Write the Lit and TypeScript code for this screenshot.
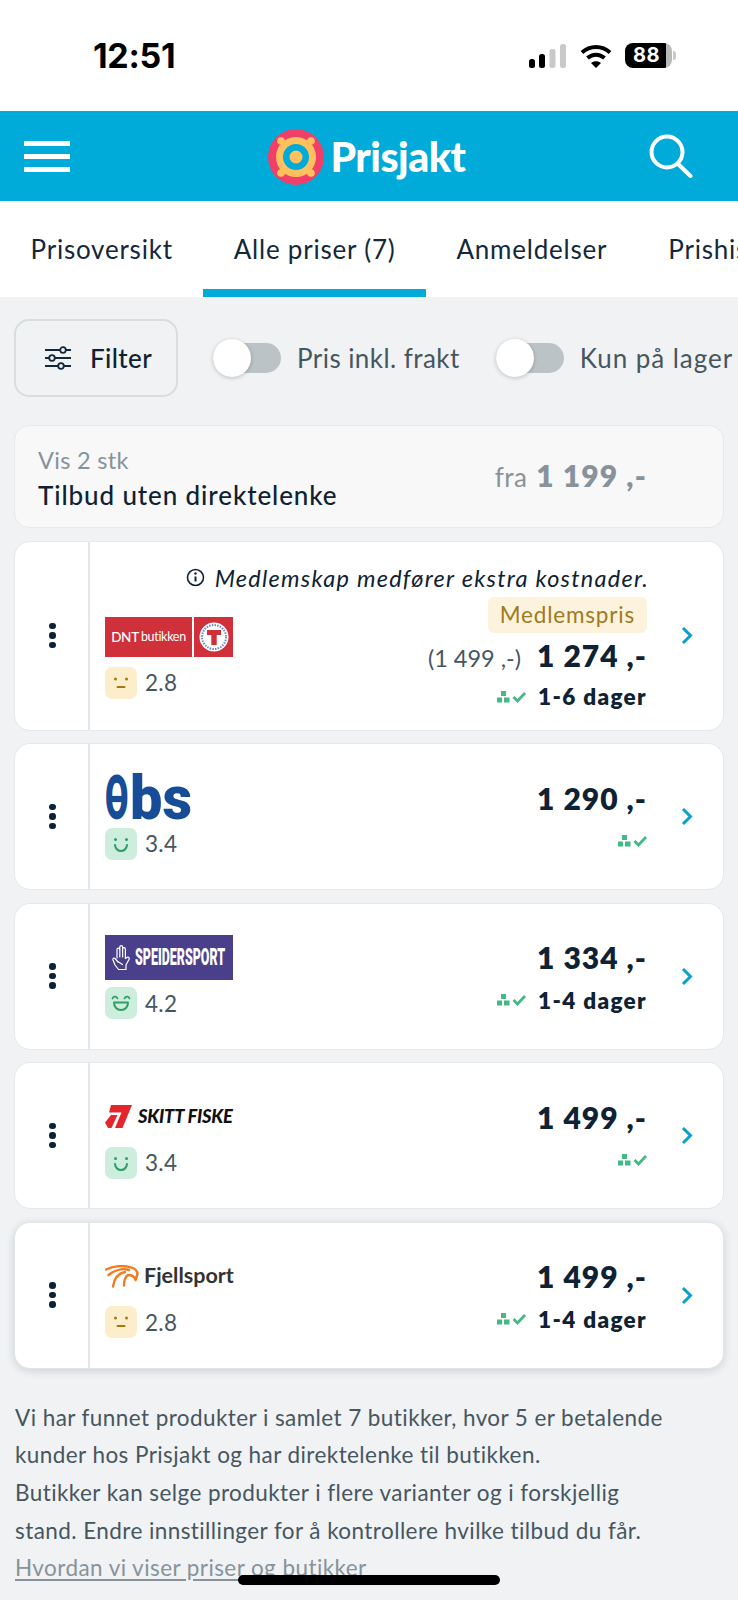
import { LitElement, html, css, svg } from "lit";
import { customElement } from "lit/decorators.js";

const faces: Record<string, unknown> = {
  neutral: svg`<circle cx="10.5" cy="12" r="1.5" fill="#a6770f"/><circle cx="21.5" cy="12" r="1.5" fill="#a6770f"/><path d="M12.5 20h7" stroke="#a6770f" stroke-width="2" stroke-linecap="round"/>`,
  smile: svg`<circle cx="10.5" cy="11.5" r="1.5" fill="#2f9e68"/><circle cx="21.5" cy="11.5" r="1.5" fill="#2f9e68"/><path d="M10 17c.6 4 3 6 6 6s5.400-2 6-6" fill="none" stroke="#2f9e68" stroke-width="2" stroke-linecap="round"/>`,
  grin: svg`<path d="M7.500 11.500c1-2.500 4-2.500 5 0M19.500 11.500c1-2.500 4-2.500 5 0" fill="none" stroke="#2f9e68" stroke-width="1.800" stroke-linecap="round"/><path d="M9 15.500h14c0 4.500-3 7.500-7 7.500s-7-3-7-7.500z" fill="none" stroke="#2f9e68" stroke-width="2" stroke-linejoin="round"/>`,
};

const stock = html`<svg class="stock" width="29" height="12" viewBox="0 0 29 12"><g fill="#43b984"><rect x="4" y="0" width="5" height="5"/><rect x="0" y="6.500" width="5" height="5"/><rect x="7" y="6.500" width="5.500" height="5"/></g><path d="M16.500 6l4 4 7.500-8" fill="none" stroke="#43b984" stroke-width="2.800"/></svg>`;

const dnt = html`<div class="dnt"><div class="dnt-a"><span class="dnt-bold">DNT</span><span class="thin">butikken</span></div><div class="dnt-b"><svg width="30" height="30" viewBox="0 0 30 30"><circle cx="15" cy="15" r="14.500" fill="#fff"/><circle cx="15" cy="15" r="12" fill="none" stroke="#6f84bd" stroke-width="2" stroke-dasharray="1.500 1.200"/><rect x="8" y="8" width="14" height="5" fill="#cf3039"/><rect x="12.300" y="8" width="5.400" height="15" fill="#cf3039"/></svg></div></div>`;

const obs = html`<div class="obs"><span class="obs-o">O<i class="obs-bar"></i></span><span class="obs-bs">bs</span></div>`;

const speider = html`<div class="speider"><svg width="20" height="27" viewBox="0 0 20 27" fill="none" stroke="#fff" stroke-width="1.200" stroke-linejoin="round" stroke-linecap="round"><path d="M5 14V5.500a1.400 1.400 0 0 1 2.800 0V3a1.400 1.400 0 0 1 2.800 0v2a1.400 1.400 0 0 1 2.800 0v9.500l2.300-1.500c1.500 0 2 1.500 1 3L14 21v4.500H6.500L3 21l-2-5c-.5-1.500 1-2.500 2-1.500l3 3.500"/><path d="M7.800 5.500V13M10.600 5v8M6.500 18l4 2.500"/></svg><span class="speider-t">SPEIDERSPORT</span></div>`;

const skitt = html`<div class="skitt"><svg width="27" height="23" viewBox="0 0 27 23"><path d="M6 0H27L17.500 23H10L16.500 7.500H4z" fill="#e4262c"/><path d="M6 10h6.500L6.500 23H3L0 17.500z" fill="#e4262c"/></svg><span>SKITT FISKE</span></div>`;

const fjell = html`<div class="fjell"><svg width="34" height="23" viewBox="0 0 34 23" fill="none" stroke="#f47a20" stroke-width="2.400" stroke-linecap="round" stroke-linejoin="round"><path d="M1 4.500C9 .5 20 0 28 3c3 1.500 4.500 4 4.500 6L30.500 15c-1-4-4-5-7.500-5-3 2-4 6-4 10.500"/><path d="M3.500 10C9 5.500 17 3 24 5"/><path d="M8 21.500C9 14 13 8.500 20 7"/></svg><span>Fjellsport</span></div>`;

const offers = [
  { logo: obs, face: "smile", tone: "good", score: "3.4", price: "1 290 ,-", days: "" },
  { logo: speider, face: "grin", tone: "good", score: "4.2", price: "1 334 ,-", days: "1-4 dager" },
  { logo: skitt, face: "smile", tone: "good", score: "3.4", price: "1 499 ,-", days: "" },
  { logo: fjell, face: "neutral", tone: "mid", score: "2.8", price: "1 499 ,-", days: "1-4 dager", lift: true },
];

@customElement("app-root")
export class AppRoot extends LitElement {
  static styles = css`
    :host { display: block; width: 738px; height: 1600px; overflow: hidden; position: relative; background: #f0f2f4; font-family: "Lato", "Noto Sans", sans-serif; color: #0e2233; }
    * { box-sizing: border-box; }
    .status { height: 111px; background: #fff; display: flex; align-items: center; padding: 0 66px 0 93px; justify-content: space-between; }
    .time { font: 700 34px/1 "Inter", sans-serif; color: #000; letter-spacing: -0.3px; }
    .sys { display: flex; align-items: center; gap: 13px; }
    .batt { width: 47px; height: 25px; border-radius: 8px; background: linear-gradient(90deg, #000 87%, #b9b9b9 87%); color: #fff; font: 700 20px/25px "Inter", sans-serif; text-align: center; padding-right: 4px; letter-spacing: .5px; position: relative; }
    .batt::after { content: ""; position: absolute; left: 48px; top: 8px; width: 3px; height: 9px; background: #c8c8c8; border-radius: 0 3px 3px 0; }
    .head { height: 90px; background: #00aad9; display: flex; align-items: center; padding: 0 45px 0 24px; justify-content: space-between; }
    .burger { width: 46px; display: flex; flex-direction: column; gap: 8px; }
    .burger i { display: block; height: 5px; background: #fff; }
    .brand { display: flex; align-items: center; gap: 6px; margin-left: 15px; padding-top: 1px; }
    .brand-t { font: 900 41px/1 "Lato", sans-serif; color: #fff; letter-spacing: -0.5px; }
    .tabs { height: 96px; background: #fff; display: flex; overflow: hidden; white-space: nowrap; }
    .tab { padding: 0 30.500px; height: 96px; line-height: 96px; font-size: 26px; letter-spacing: .78px; color: #14283a; flex: none; border-bottom: 8px solid transparent; }
    .tab.on { border-bottom-color: #00aad9; }
    .filters { display: flex; align-items: center; padding: 22px 0 0 14px; white-space: nowrap; }
    .filter { width: 164px; height: 78px; border: 2px solid #d8dde0; border-radius: 15px; display: flex; align-items: center; justify-content: center; gap: 18px; padding-left: 4px; font-size: 26px; letter-spacing: .4px; font-weight: 500; margin-right: 35px; flex: none; }
    .toggle { display: flex; align-items: center; gap: 16px; font-size: 26px; letter-spacing: .44px; color: #46565f; margin-right: 36px; flex: none; }
    .toggle.wide { letter-spacing: .95px; }
    .track { width: 68px; height: 30px; border-radius: 15px; background: #bcc3c7; position: relative; flex: none; }
    .track::before { content: ""; position: absolute; left: 0; top: -4px; width: 38px; height: 38px; border-radius: 50%; background: #fff; box-shadow: 0 1px 4px rgba(0,0,0,.22); }
    .list { padding: 28px 15px 0 15px; display: flex; flex-direction: column; gap: 14.500px; }
    .nolink { height: 103px; background: #f8f8f9; border: 1px solid #e6e9eb; border-radius: 15px; display: flex; align-items: center; padding: 0 76px 0 23px; justify-content: space-between; margin: 0 -1px -1px -1px; }
    .nl-left { padding-top: 8px; }
    .nl-small { font-size: 23.500px; letter-spacing: .3px; color: #87929a; line-height: 30px; margin-top: -2px; }
    .nl-big { font-size: 26px; letter-spacing: .89px; font-weight: 500; line-height: 40px; }
    .fra { font-size: 26px; color: #87929a; letter-spacing: .4px; margin-top: -3px; }
    .fra b { font-size: 30px; font-weight: 800; letter-spacing: 1.1px; margin-left: 2px; }
    .card { background: #fff; border-radius: 15px; display: flex; height: 145px; box-shadow: 0 0 0 1px #e6e9eb; }
    .card.first { height: 188px; }
    .card.lift { box-shadow: 0 0 0 1px #e2e5e8, 0 2px 10px rgba(30,50,70,.2); }
    .kebab { width: 75px; flex: none; border-right: 2px solid #e3e6e9; display: flex; flex-direction: column; align-items: center; justify-content: center; gap: 3px; padding-left: 2px; }
    .kebab i { width: 6.500px; height: 6.500px; border-radius: 50%; background: #0c2236; display: block; }
    .main { flex: 1; min-width: 0; display: flex; align-items: center; padding: 0 30px 0 15px; }
    .info { flex: 1; min-width: 0; display: flex; flex-direction: column; }
    .info.plain { padding-top: 4px; }
    .row { display: flex; justify-content: space-between; }
    .stack { display: flex; flex-direction: column; gap: 7px; margin-top: 1px; }
    .slot { height: 46px; display: flex; align-items: center; width: 128px; }
    .rate { display: flex; align-items: center; gap: 8px; font-size: 22.500px; color: #46565f; letter-spacing: .3px; }
    .chip { width: 32px; height: 32px; border-radius: 7px; display: block; }
    .chip.good { background: #cdeedd; }
    .chip.mid { background: #fdeecb; }
    .chevron { flex: none; margin-left: 34px; display: block; }
    .price-col { display: flex; flex-direction: column; align-items: flex-end; padding-top: 4px; }
    .price { font-size: 30px; font-weight: 800; letter-spacing: 1px; line-height: 40px; white-space: nowrap; }
    .price small { font-size: 23.500px; font-weight: 400; color: #46565f; letter-spacing: 0; margin-right: 16px; line-height: 0; }
    .deliv { display: flex; align-items: center; gap: 12px; font-size: 22.500px; font-weight: 800; letter-spacing: 1.35px; height: 46px; white-space: nowrap; }
    .msg { display: flex; align-items: center; justify-content: flex-end; font-size: 23.500px; font-style: italic; letter-spacing: 1.25px; gap: 10px; height: 24px; margin: 13px -2px 0 0; white-space: nowrap; }
    .badge { align-self: flex-end; height: 36px; border-radius: 6px; background: #fdf3dd; color: #a07a20; font-size: 22.500px; letter-spacing: .8px; line-height: 36px; padding: 0 12px; margin-top: 7px; }
    .first-row { margin-top: -19px; }
    .first-row .stack { margin-top: 0; }
    .first-row .price-col { padding-top: 21px; }
    .first-row .deliv { height: 44px; }
    .note { padding: 31px 15px 0; font-size: 22.500px; line-height: 37.700px; letter-spacing: .42px; color: #46565f; white-space: nowrap; }
    .note a { color: #87929a; text-decoration: underline; text-underline-offset: 3px; display: block; }
    .home { position: absolute; left: 238px; top: 1575px; width: 262px; height: 9.500px; border-radius: 5px; background: #000; }

    .dnt { width: 128px; height: 40px; display: flex; gap: 2px; }
    .dnt-a { width: 87px; background: #cf3039; color: #fff; font-size: 12.500px; display: flex; align-items: center; justify-content: center; gap: 2px; white-space: nowrap; letter-spacing: -.3px; }
    .dnt-bold { font-weight: 500; font-size: 13.500px; }
    .dnt-b { flex: 1; background: #cf3039; display: flex; align-items: center; justify-content: center; }
    .obs { height: 46px; width: 88px; display: flex; font: 900 40px/46px "Roboto", sans-serif; color: #174c96; white-space: nowrap; }
    .obs-o { width: 25px; flex: none; display: block; position: relative; transform: translateY(1px) scale(.85, 1.55); transform-origin: 0 50%; }
    .obs-bs { flex: none; display: block; width: 62px; transform: translateY(1px) scale(1.44, 1.55); transform-origin: 0 50%; }
    .obs-bar { position: absolute; left: 8px; top: 20.500px; width: 12px; height: 4.500px; background: #174c96; }
    .speider { width: 128px; height: 45px; background: #4a3f8a; display: flex; align-items: center; padding-left: 7px; gap: 3px; overflow: hidden; }
    .speider svg { flex: none; }
    .speider-t { flex: none; font: 900 24px/1 "Roboto", sans-serif; color: #fff; transform: scaleX(.52); transform-origin: 0 50%; white-space: nowrap; }
    .skitt { display: flex; align-items: center; gap: 6px; font: italic 900 18.300px/1 "Lato", sans-serif; color: #111; white-space: nowrap; letter-spacing: -.2px; }
    .skitt svg, .fjell svg { flex: none; }
    .fjell { display: flex; align-items: center; gap: 5px; font: 700 21.500px/1 "Lato", sans-serif; color: #333; white-space: nowrap; }
  `;

  private rate(face: string, tone: string, score: string) {
    return html`<div class="rate"><svg class="chip ${tone}" viewBox="0 0 32 32">${faces[face]}</svg><span>${score}</span></div>`;
  }
  private chevron() {
    return html`<svg class="chevron" width="12" height="19" viewBox="0 0 12 19"><path d="M2 2l7.500 7.500L2 17" fill="none" stroke="#0a9fd0" stroke-width="3"/></svg>`;
  }
  private kebab() {
    return html`<div class="kebab"><i></i><i></i><i></i></div>`;
  }

  render() {
    return html`
      <div class="status">
        <span class="time">12:51</span>
        <div class="sys">
          <svg width="38" height="24" viewBox="0 0 38 24"><rect x="0" y="15" width="6" height="9" rx="2.500" fill="#000"/><rect x="10" y="10" width="6" height="14" rx="2.500" fill="#000"/><rect x="20.500" y="5" width="6" height="19" rx="2.500" fill="#c9c9c9"/><rect x="31" y="0" width="6" height="24" rx="2.500" fill="#c9c9c9"/></svg>
          <svg width="32" height="24" viewBox="0 0 32 24" fill="none" stroke="#000" stroke-width="4"><path d="M2 8.500c8-7.500 20-7.500 28 0"/><path d="M7.500 14c5-4.500 12-4.500 17 0"/><path d="M16 24l-5-5c2.800-2.400 7.200-2.400 10 0z" fill="#000" stroke="none"/></svg>
          <div class="batt">88</div>
        </div>
      </div>
      <div class="head">
        <div class="burger"><i></i><i></i><i></i></div>
        <div class="brand">
          <svg width="56" height="56" viewBox="0 0 56 56"><circle cx="28" cy="28" r="28" fill="#f0406a"/><circle cx="28" cy="28" r="20" fill="#ffc15e"/><g fill="#ffc15e"><circle cx="13" cy="12" r="3.800"/><circle cx="43" cy="12" r="3.800"/><circle cx="13" cy="44" r="3.800"/><circle cx="43" cy="44" r="3.800"/></g><circle cx="28" cy="28" r="13" fill="#00aad9"/><circle cx="28" cy="28" r="6.500" fill="#ffc15e"/></svg>
          <span class="brand-t">Prisjakt</span>
        </div>
        <svg width="44" height="44" viewBox="0 0 44 44" fill="none" stroke="#fff" stroke-width="4" stroke-linecap="round"><circle cx="18" cy="18" r="15.500"/><path d="M28.500 29.500L41.500 42"/></svg>
      </div>
      <div class="tabs">
        <div class="tab">Prisoversikt</div>
        <div class="tab on">Alle priser (7)</div>
        <div class="tab">Anmeldelser</div>
        <div class="tab">Prishistorikk</div>
      </div>
      <div class="filters">
        <div class="filter">
          <svg width="28" height="24" viewBox="0 0 28 24" fill="none" stroke="#14283a" stroke-width="1.800"><path d="M1 4h15M22 4h5M1 12h4M11 12h16M1 20h13M20 20h7"/><circle cx="19" cy="4" r="2.800"/><circle cx="8" cy="12" r="2.800"/><circle cx="17" cy="20" r="2.800"/></svg>
          <span>Filter</span>
        </div>
        <div class="toggle"><span class="track"></span><span>Pris inkl. frakt</span></div>
        <div class="toggle wide"><span class="track"></span><span>Kun på lager</span></div>
      </div>
      <div class="list">
        <div class="nolink">
          <div class="nl-left"><div class="nl-small">Vis 2 stk</div><div class="nl-big">Tilbud uten direktelenke</div></div>
          <div class="fra">fra <b>1 199 ,-</b></div>
        </div>
        <div class="card first">
          ${this.kebab()}
          <div class="main">
            <div class="info">
              <div class="msg">
                <svg width="19" height="19" viewBox="0 0 19 19" fill="none" stroke="#0e2233" stroke-width="1.600"><circle cx="9.500" cy="9.500" r="8"/><path d="M9.500 8.500v5" stroke-width="2"/><circle cx="9.500" cy="5.500" r="1.200" fill="#0e2233" stroke="none"/></svg>
                <span>Medlemskap medfører ekstra kostnader.</span>
              </div>
              <div class="badge">Medlemspris</div>
              <div class="row first-row">
                <div class="stack">
                  <div class="slot">${dnt}</div>
                  ${this.rate("neutral", "mid", "2.8")}
                </div>
                <div class="price-col">
                  <div class="price"><small>(1 499 ,-)</small>1 274 ,-</div>
                  <div class="deliv">${stock}<span>1-6 dager</span></div>
                </div>
              </div>
            </div>
            ${this.chevron()}
          </div>
        </div>
        ${offers.map(
          (o) => html`
            <div class="card ${o.lift ? "lift" : ""}">
              ${this.kebab()}
              <div class="main">
                <div class="info plain">
                  <div class="row">
                    <div class="stack">
                      <div class="slot">${o.logo}</div>
                      ${this.rate(o.face, o.tone, o.score)}
                    </div>
                    <div class="price-col">
                      <div class="price">${o.price}</div>
                      <div class="deliv">${stock}${o.days ? html`<span>${o.days}</span>` : ""}</div>
                    </div>
                  </div>
                </div>
                ${this.chevron()}
              </div>
            </div>
          `
        )}
      </div>
      <div class="note">
        <div>Vi har funnet produkter i samlet 7 butikker, hvor 5 er betalende</div>
        <div>kunder hos Prisjakt og har direktelenke til butikken.</div>
        <div>Butikker kan selge produkter i flere varianter og i forskjellig</div>
        <div>stand. Endre innstillinger for å kontrollere hvilke tilbud du får.</div>
        <a>Hvordan vi viser priser og butikker</a>
      </div>
      <div class="home"></div>
    `;
  }
}
